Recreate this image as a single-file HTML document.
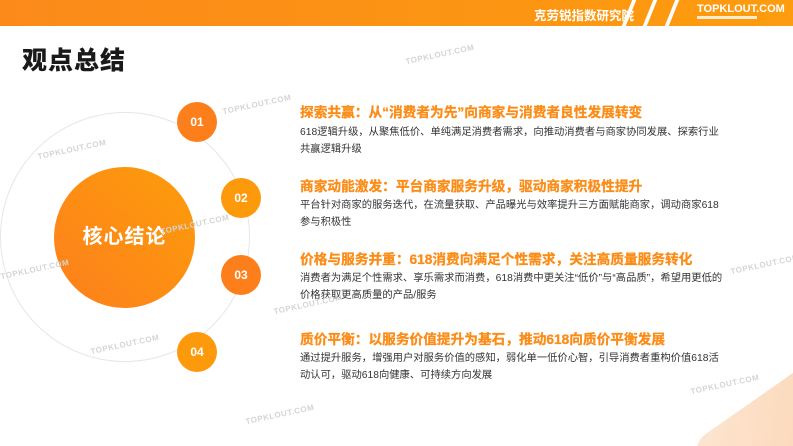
<!DOCTYPE html>
<html><head><meta charset="utf-8"><style>
*{margin:0;padding:0;box-sizing:border-box}
html,body{width:793px;height:446px;overflow:hidden}
body{background:#fff;position:relative;font-family:"Liberation Sans","Noto Sans CJK SC",sans-serif}
.clip{position:absolute;left:0;top:0;width:793px;height:446px;overflow:hidden}
.hdr{position:absolute;left:0;top:0;width:793px;height:26px;background:linear-gradient(90deg,#fb8a1a,#fd9c0e);overflow:hidden}
.hdr .t{position:absolute;left:534px;top:5px;color:#fff;font-size:12.5px;font-weight:bold}
.hdr .s{position:absolute;top:-2px;width:4px;height:30px;background:#fff;transform:skewX(-22deg)}
.hdr .logo{position:absolute;left:697px;top:3px;color:#fff;font-size:11px;font-weight:bold}
.hdr .bar{position:absolute;left:697px;top:16px;width:60px;height:3px;background:#fff;opacity:.8}
.title{position:absolute;left:22px;top:41px;font-size:25px;font-weight:900;color:#1a1a1a;letter-spacing:1px}
.arc{position:absolute;left:0;top:112px;width:250px;height:250px;border-radius:50%;border:1px solid #e6e6e6}
.big{position:absolute;left:54px;top:167px;width:141px;height:141px;border-radius:50%;background:linear-gradient(45deg,#fd7f1c,#fd9d0b);color:#fff;font-size:20px;font-weight:bold;text-align:center;line-height:141px;letter-spacing:1px}
.n{position:absolute;width:40px;height:40px;border-radius:50%;color:#fff;font-size:12px;font-weight:bold;text-align:center;line-height:40px}
.h{position:absolute;left:300px;font-size:13.7px;font-weight:bold;color:#fb8c17;white-space:nowrap;-webkit-text-stroke:0.3px #fb8c17}
.p{position:absolute;left:300px;width:428px;font-size:10.3px;color:#333;line-height:17px}
.wm{position:absolute;color:#d4d4d4;font-size:8px;font-weight:bold;transform:rotate(-12deg);letter-spacing:.5px}
.deco{position:absolute;left:725px;top:375px;width:190px;height:190px;border-radius:22px;background:linear-gradient(135deg,#fde6d2,#fbc79a);transform:rotate(-35deg)}
</style></head><body><div class="clip">
<div class="hdr">
<div class="t">克劳锐指数研究院</div>
<div class="s" style="left:627px"></div><div class="s" style="left:648px"></div><div class="s" style="left:670px"></div>
<div class="logo">TOPKLOUT.COM</div><div class="bar"></div>
</div>
<div class="title">观点总结</div>
<div class="deco"></div>
<div class="arc"></div>
<div class="big">核心结论</div>
<div class="n" style="left:177px;top:102px;background:#fd7f1c">01</div>
<div class="n" style="left:221px;top:178px;background:#fd9a0c">02</div>
<div class="n" style="left:221px;top:255px;background:#fd7f1c">03</div>
<div class="n" style="left:177px;top:332px;background:#fd9a0c">04</div>
<div class="h" style="top:101px">探索共赢：从“消费者为先”向商家与消费者良性发展转变</div>
<div class="p" style="top:124px">618逻辑升级，从聚焦低价、单纯满足消费者需求，向推动消费者与商家协同发展、探索行业共赢逻辑升级</div>
<div class="h" style="top:175px">商家动能激发：平台商家服务升级，驱动商家积极性提升</div>
<div class="p" style="top:197px">平台针对商家的服务迭代，在流量获取、产品曝光与效率提升三方面赋能商家，调动商家618参与积极性</div>
<div class="h" style="top:248px">价格与服务并重：618消费向满足个性需求，关注高质量服务转化</div>
<div class="p" style="top:270px">消费者为满足个性需求、享乐需求而消费，618消费中更关注“低价”与“高品质”，希望用更低的价格获取更高质量的产品/服务</div>
<div class="h" style="top:328px">质价平衡：以服务价值提升为基石，推动618向质价平衡发展</div>
<div class="p" style="top:350px">通过提升服务，增强用户对服务价值的感知，弱化单一低价心智，引导消费者重构价值618活动认可，驱动618向健康、可持续方向发展</div>
<div class="wm" style="left:405px;top:50px">TOPKLOUT.COM</div>
<div class="wm" style="left:222px;top:100px">TOPKLOUT.COM</div>
<div class="wm" style="left:37px;top:145px">TOPKLOUT.COM</div>
<div class="wm" style="left:160px;top:220px">TOPKLOUT.COM</div>
<div class="wm" style="left:0px;top:265px">TOPKLOUT.COM</div>
<div class="wm" style="left:90px;top:340px">TOPKLOUT.COM</div>
<div class="wm" style="left:273px;top:300px">TOPKLOUT.COM</div>
<div class="wm" style="left:690px;top:380px">TOPKLOUT.COM</div>
<div class="wm" style="left:730px;top:260px">TOPKLOUT.COM</div>
<div class="wm" style="left:245px;top:410px">TOPKLOUT.COM</div>
</div></body></html>
